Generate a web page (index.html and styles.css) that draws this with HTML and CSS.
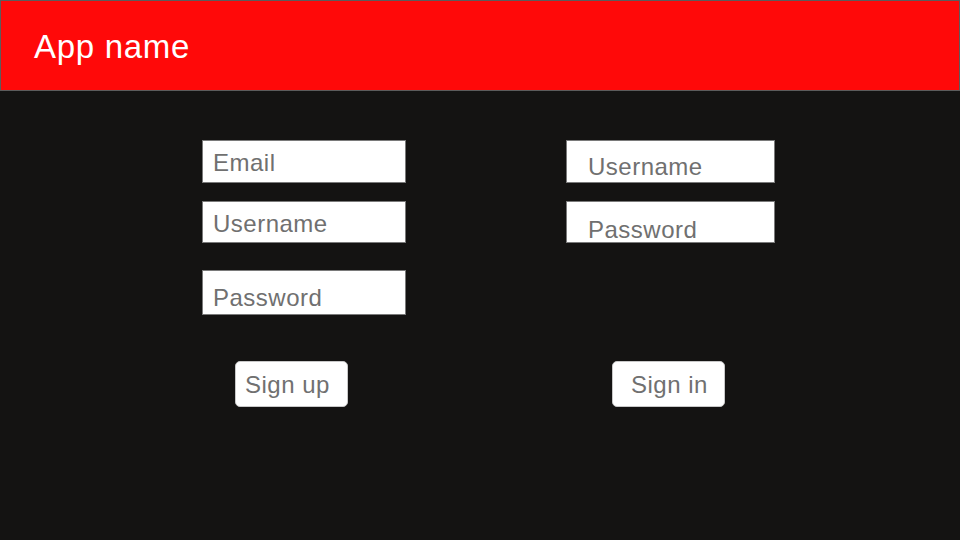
FILE: index.html
```html
<!DOCTYPE html>
<html lang="en">
<head>
    <meta charset="UTF-8">
    <meta name="viewport" content="width=device-width, initial-scale=1.0">
    <title>App name</title>
    <link rel="stylesheet" href="styles.css">
</head>
<body>
    <header class="topbar">
        <h1 class="app-title">App name</h1>
    </header>
    <main class="forms">
        <section class="form signup">
            <div class="field email">Email</div>
            <div class="field username">Username</div>
            <div class="field password">Password</div>
            <button class="btn">Sign up</button>
        </section>
        <section class="form signin">
            <div class="field username">Username</div>
            <div class="field password">Password</div>
            <button class="btn">Sign in</button>
        </section>
    </main>
</body>
</html>
```

FILE: styles.css
```css
* {
    box-sizing: border-box;
}
body {
    margin: 0;
    height: 540px;
    background-color: #141312;
    font-family: "Liberation Sans", Arial, sans-serif;
}
.topbar {
    height: 91px;
    padding: 27px 0 0 33px;
    background-color: #ff0909;
    border: 1px solid #5c5c5c;
}
.app-title {
    margin: 0;
    font-size: 33px;
    font-weight: normal;
    line-height: 38px;
    letter-spacing: 0.7px;
    color: #fff;
}
.forms {
    display: flex;
    padding: 49px 0 0 202px;
}
.form {
    display: flex;
    flex-direction: column;
}
.field {
    background-color: #fff;
    border: 1px solid #7a7a7a;
    color: #707070;
    font-size: 24px;
    line-height: 26px;
    letter-spacing: 0.5px;
}
.btn {
    width: 113px;
    height: 46px;
    padding: 0;
    text-align: left;
    background-color: #fff;
    border: 1px solid #c8c8c8;
    border-radius: 5px;
    color: #707070;
    font-family: inherit;
    font-size: 24px;
    line-height: 46px;
    letter-spacing: 0.5px;
}

/* sign up column */
.signup {
    width: 204px;
}
.signup .field {
    padding-left: 10px;
}
.signup .email {
    height: 43px;
    padding-top: 9px;
}
.signup .username {
    height: 42px;
    margin-top: 18px;
    padding-top: 9px;
}
.signup .password {
    height: 45px;
    margin-top: 27px;
    padding-top: 14px;
}
.signup .btn {
    margin: 46px 0 0 33px;
    padding-left: 9px;
}

/* sign in column */
.signin {
    width: 209px;
    margin-left: 160px;
}
.signin .field {
    padding-left: 21px;
}
.signin .username {
    height: 43px;
    padding-top: 13px;
}
.signin .password {
    height: 42px;
    margin-top: 18px;
    padding-top: 15px;
}
.signin .btn {
    margin: auto 0 0 46px;
    padding-left: 18px;
}
```
